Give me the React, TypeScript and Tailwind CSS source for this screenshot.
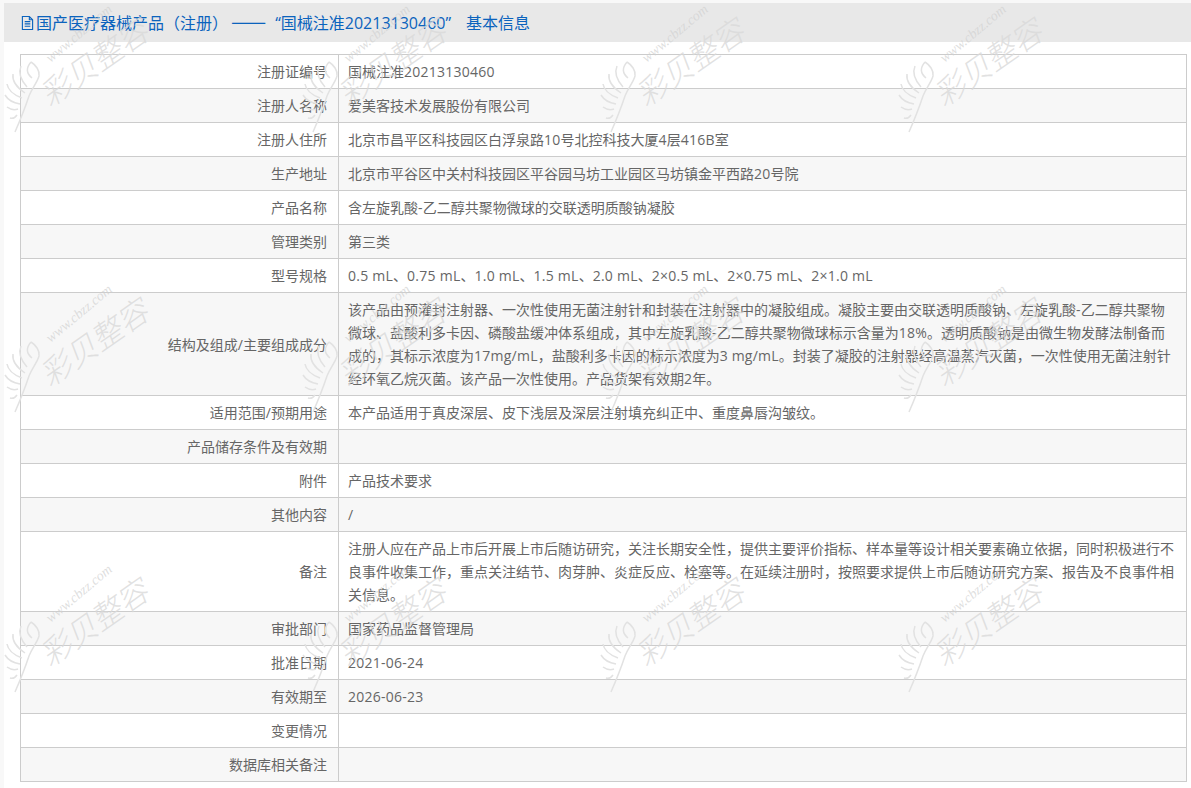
const FONT = 'font-["Open_Sans","Noto_Sans_CJK_SC",sans-serif]'

const rows: [string, string][] = [
  ['注册证编号', '国械注准20213130460'],
  ['注册人名称', '爱美客技术发展股份有限公司'],
  ['注册人住所', '北京市昌平区科技园区白浮泉路10号北控科技大厦4层416B室'],
  ['生产地址', '北京市平谷区中关村科技园区平谷园马坊工业园区马坊镇金平西路20号院'],
  ['产品名称', '含左旋乳酸-乙二醇共聚物微球的交联透明质酸钠凝胶'],
  ['管理类别', '第三类'],
  ['型号规格', '0.5 mL、0.75 mL、1.0 mL、1.5 mL、2.0 mL、2×0.5 mL、2×0.75 mL、2×1.0 mL'],
  [
    '结构及组成/主要组成成分',
    '该产品由预灌封注射器、一次性使用无菌注射针和封装在注射器中的凝胶组成。凝胶主要由交联透明质酸钠、左旋乳酸-乙二醇共聚物微球、盐酸利多卡因、磷酸盐缓冲体系组成，其中左旋乳酸-乙二醇共聚物微球标示含量为18%。透明质酸钠是由微生物发酵法制备而成的，其标示浓度为17mg/mL，盐酸利多卡因的标示浓度为3 mg/mL。封装了凝胶的注射器经高温蒸汽灭菌，一次性使用无菌注射针经环氧乙烷灭菌。该产品一次性使用。产品货架有效期2年。',
  ],
  ['适用范围/预期用途', '本产品适用于真皮深层、皮下浅层及深层注射填充纠正中、重度鼻唇沟皱纹。'],
  ['产品储存条件及有效期', ''],
  ['附件', '产品技术要求'],
  ['其他内容', '/'],
  [
    '备注',
    '注册人应在产品上市后开展上市后随访研究，关注长期安全性，提供主要评价指标、样本量等设计相关要素确立依据，同时积极进行不良事件收集工作，重点关注结节、肉芽肿、炎症反应、栓塞等。在延续注册时，按照要求提供上市后随访研究方案、报告及不良事件相关信息。',
  ],
  ['审批部门', '国家药品监督管理局'],
  ['批准日期', '2021-06-24'],
  ['有效期至', '2026-06-23'],
  ['变更情况', ''],
  ['数据库相关备注', ''],
]

// latin runs are a touch wider in the original font
function Value({ text }: { text: string }) {
  return (
    <>
      {text.split(/([\x21-\x7e×]+(?: mL)?)/).map((part, i) =>
        i % 2 === 1 ? (
          <span key={i} className="tracking-[0.25px]">{part}</span>
        ) : (
          part
        ),
      )}
    </>
  )
}

// one tile of the site's repeated watermark
function Watermark() {
  return (
    <div className="relative h-[280px] w-[298px]">
      <div className="absolute left-[48px] top-[56px] origin-left -rotate-[40deg] whitespace-nowrap font-['Liberation_Serif',serif] text-[14px] italic leading-none text-[#d0d0d0]/70">
        www.cbzz.com
      </div>
      <div className="absolute left-[42px] top-[84px] origin-left -rotate-[35deg] whitespace-nowrap font-['Noto_Sans_CJK_SC',sans-serif] text-[31px] font-light italic leading-none text-[#d9d9d9]/80">
        彩贝整容
      </div>
      <svg viewBox="0 0 40 76" className="absolute left-[3px] top-[63px] h-[76px] w-[40px]" fill="none" stroke="#e2e2e2" strokeWidth="1.5">
        <path d="M28 2c5 3 9 9 8 14-2 7-7 12-10 20-3 9-7 20-14 36" />
        <path d="M28 2c-5 6-5 11 1 16" />
        <path d="M18 6c-3 7-1 13 6 21" />
        <path d="M10 14c-1 7 3 13 12 19" />
        <path d="M4 24c1 6 7 11 15 14" />
        <path d="M2 35c3 5 9 8 15 9" />
        <path d="M4 47c4 3 8 3 11 2" />
        <path d="M7 58c3 1 5 0 7-3" />
      </svg>
    </div>
  )
}

export default function App() {
  return (
    <div className={`${FONT} relative h-[788px] w-[1191px] overflow-hidden bg-[#f8f8f8] pl-[4px] pt-[3px]`}>
      <div className="h-full bg-white">
        <div className="flex h-[39px] items-center bg-[#e8e8e8] pl-[17px] text-[16px] text-[#0b63bd]">
          <svg viewBox="0 0 14 16" className="mr-[2px] h-[16px] w-[13px] shrink-0" fill="none" stroke="currentColor" strokeWidth="1.2">
            <path d="M1.5 1h7.5l3.5 3.5V15h-11z" />
            <path d="M9 1v3.5h3.5M4 6.5h6M4 9h6M4 11.5h6" />
          </svg>
          <span className="whitespace-pre">
            国产医疗器械产品（注册）
            <span className="ml-[3px] font-['Noto_Sans_CJK_SC',sans-serif] text-[21px] leading-none">——</span>
            <span className="ml-[9px]">“国械注准20213130460”</span>
            <span className="ml-[15px]">基本信息</span>
          </span>
        </div>
        <div className="pl-[16px] pt-[12px]">
          <table className="w-[1167px] table-fixed border-collapse border border-[#ccc] text-[14px] leading-[23px] text-[#666]">
            <tbody>
              {rows.map(([label, value], i) => (
                <tr key={label} className={i % 2 === 1 ? 'bg-[#f7f7f7]' : ''}>
                  <td className="w-[318px] border border-[#ccc] pl-[10px] pr-[11px] py-[5px] text-right">{label}</td>
                  <td className="border border-[#ccc] pl-[9px] pr-[10px] py-[5px]">
                    {value ? <Value text={value} /> : ' '}
                  </td>
                </tr>
              ))}
            </tbody>
          </table>
        </div>
      </div>
      <div className="pointer-events-none absolute inset-0 -mt-[3px] grid grid-cols-[repeat(4,298px)] auto-rows-[280px]">
        {Array.from({ length: 12 }, (_, i) => (
          <Watermark key={i} />
        ))}
      </div>
    </div>
  )
}
